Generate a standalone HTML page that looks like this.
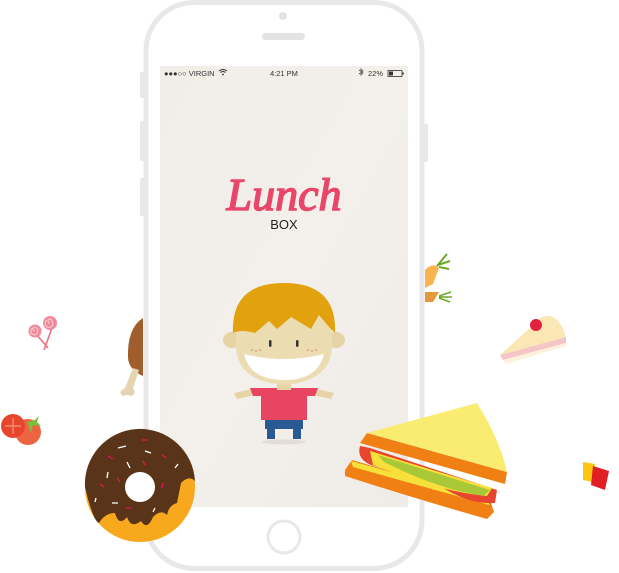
<!DOCTYPE html>
<html><head><style>html,body{margin:0;padding:0;background:#fff;overflow:hidden}</style></head>
<body>
<svg width="619" height="573" viewBox="0 0 619 573" xmlns="http://www.w3.org/2000/svg" style="display:block">
<rect x="140" y="72" width="5" height="26" rx="2" fill="#e8e8e8"/>
<rect x="140" y="121" width="5" height="40" rx="2" fill="#e8e8e8"/>
<rect x="140" y="178" width="5" height="38" rx="2" fill="#e8e8e8"/>
<rect x="423" y="124" width="5" height="38" rx="2" fill="#e8e8e8"/>
<rect x="146" y="2.5" width="276" height="566" rx="48" fill="#fff" stroke="#e8e8e8" stroke-width="5"/>
<circle cx="283" cy="16" r="4" fill="#e3e3e3"/>
<rect x="262" y="33" width="43" height="7" rx="3.5" fill="#e3e3e3"/>
<circle cx="284" cy="537" r="16" fill="#fff" stroke="#e8e8e8" stroke-width="3"/>
<defs><linearGradient id="sg" x1="0" y1="0" x2="1" y2="1"><stop offset="0" stop-color="#f1ede8"/><stop offset="0.5" stop-color="#f3f0eb"/><stop offset="1" stop-color="#efebe6"/></linearGradient></defs>
<rect x="160" y="66" width="248" height="441" fill="url(#sg)"/>
<g font-family="Liberation Sans, sans-serif" font-size="7.5" fill="#333">
<text x="164" y="76">●●●○○ VIRGIN</text>
<text x="270" y="76">4:21 PM</text>
<text x="368" y="76">22%</text>
</g>
<path d="M219 71 q4 -3 8 0 M220.5 72.5 q2.5 -2 5 0" stroke="#333" fill="none" stroke-width="1"/>
<circle cx="223" cy="74.5" r="0.9" fill="#333"/>
<path d="M359 70 l4 3 l-2 2 v-6 l2 2 l-4 3" stroke="#555" fill="none" stroke-width="0.8"/>
<rect x="388" y="70.5" width="14" height="6" fill="none" stroke="#333" stroke-width="0.8"/>
<rect x="389" y="71.5" width="4" height="4" fill="#333"/>
<rect x="402.5" y="72.5" width="1.3" height="2" fill="#333"/>
<text x="284" y="210" text-anchor="middle" font-family="Liberation Serif, serif" font-style="italic" font-size="46" fill="#e8476a" stroke="#e8476a" stroke-width="1.5">Lunch</text>
<text x="284" y="229" text-anchor="middle" font-family="Liberation Sans, sans-serif" font-size="13" fill="#222">BOX</text>
<ellipse cx="284" cy="442" rx="22" ry="2.5" fill="#e2ddd6"/>
<rect x="265" y="415" width="38" height="14" fill="#2a5a94"/>
<rect x="267" y="425" width="8" height="14" fill="#2a5a94"/>
<rect x="293" y="425" width="8" height="14" fill="#2a5a94"/>
<path d="M234 393 l18 -4 l3 6 l-18 4z M334 393 l-18 -4 l-3 6 l18 4z" fill="#e6d3a6"/>
<path d="M250 388 h68 l-3 8 l-8 0 v24 h-46 v-24 l-8 0z" fill="#e84562"/>
<rect x="277" y="378" width="14" height="12" fill="#e6d3a6"/>
<ellipse cx="232" cy="340" rx="9" ry="8" fill="#e6d3a6"/>
<ellipse cx="336" cy="340" rx="9" ry="8" fill="#e6d3a6"/>
<path d="M236 325 q0 -12 10 -14 h76 q10 2 10 14 v20 q0 36 -48 40 q-48 -4 -48 -40z" fill="#ecdcb2"/>
<path d="M233 333 q-2 -50 51 -50 q53 0 51 50 l-6 -6 l-10 -12 l-8 14 l-20 -12 l-14 12 l-8 -8 l-14 12 q-14 -4 -22 0z" fill="#e2a20e"/>
<path d="M244 354 q40 10 80 0 q-6 26 -40 26 q-34 0 -40 -26z" fill="#fff"/>
<rect x="269" y="340" width="2.5" height="7" rx="1.2" fill="#333"/>
<rect x="296" y="340" width="2.5" height="7" rx="1.2" fill="#333"/>
<g fill="#e89a8e"><circle cx="252" cy="350" r="1"/><circle cx="256" cy="351" r="1"/><circle cx="260" cy="350" r="1"/><circle cx="308" cy="350" r="1"/><circle cx="312" cy="351" r="1"/><circle cx="316" cy="350" r="1"/></g>
<path d="M425 270 q8 -8 14 -2 l-6 16 l-8 4z" fill="#f7b44f"/>
<path d="M437 266 l10 -12 M438 265 l12 -4 M439 267 l10 2" stroke="#6aa825" stroke-width="2"/>
<path d="M425 292 h14 l-6 10 h-8z" fill="#e49a3c"/>
<path d="M439 296 l12 -4 M439 297 l13 0 M439 298 l11 4" stroke="#6aa825" stroke-width="1.5"/>
<path d="M500 355 l42 -38 q14 -5 22 14 l2 6z" fill="#fbe7b4"/>
<path d="M500 355 l66 -18 l0 6 l-63 17z" fill="#f6c6c7"/>
<path d="M503 360 l63 -17 l0 3 l-60 18z" fill="#fcf1dd"/>
<circle cx="536" cy="325" r="6" fill="#e3223f"/>
<path d="M583 462 l12 2 l-2 18 l-10 -2z" fill="#fcc70d"/>
<path d="M593 466 l16 5 l-4 19 l-14 -5z" fill="#e11f25"/>
<!-- sandwich -->
<path d="M345 470 L352 460 L490 500 L494 512 L487 519 Q420 500 345 476 Z" fill="#f08013"/>
<path d="M351 461 L490 499 L489 505 L353 467 Z" fill="#f8e03a"/>
<path d="M360 446 Q356 460 374 466 L440 486 Q470 505 495 503 L497 490 L370 448 Z" fill="#e84530"/>
<path d="M370 451 L492 488 L487 496 Q440 492 373 465 Z" fill="#f8e03a"/>
<path d="M378 455 L490 490 L484 496 Q440 490 384 462 Z" fill="#a8c838"/>
<path d="M360 443 L367 433 L507 472 L505 484 Z" fill="#f08013"/>
<path d="M367 433 L477 403 Q500 440 507 472 Z" fill="#f9ec70"/>
<path d="M36 334 l12 14 M52 328 l-8 22" stroke="#ef6f83" stroke-width="1.6"/>
<circle cx="35" cy="331" r="6.5" fill="#f28a9b"/>
<circle cx="50" cy="323" r="7" fill="#f28a9b"/>
<path d="M35 331 a2 2 0 1 1 2 -2 a3.5 3.5 0 1 1 -4 -1 M50 323 a2 2 0 1 1 2 -2 a4 4 0 1 1 -5 -1" stroke="#fbd0d7" fill="none" stroke-width="1"/>
<circle cx="28" cy="432" r="13" fill="#ec6540"/>
<circle cx="13" cy="426" r="12" fill="#e8452e"/>
<path d="M13 418 v16 M5 426 h16" stroke="#f28a68" stroke-width="1.5"/>
<path d="M27 422 l8 -2 l4 -4 l-2 6 l4 4 l-8 -1 l-2 8 l-2 -6z" fill="#7cbd3d"/>
<path d="M143 318 q-16 10 -15 40 q1 12 15 18z" fill="#a05e2c"/>
<path d="M133 368 l6 2 l-6 18 q4 6 -2 8 q-4 -2 -8 0 q-6 -4 2 -8z" fill="#e6d3b0"/>
<circle cx="140" cy="487" r="55" fill="#f7a81c"/>
<path d="M85 487 a55 55 0 0 1 110 -6 q-6 -6 -14 2 q-2 10 -4 20 q-8 2 -10 12 q-6 -6 -14 2 q-6 14 -12 4 q-10 8 -14 -4 q-8 10 -12 -4 q-10 0 -16 10 q-6 -2 -14 -36z" fill="#5a3418"/>
<circle cx="140" cy="487" r="15" fill="#fff"/>
<g stroke="#fff" stroke-width="1.3"><path d="M118 448 l8 -2 M145 451 l6 2 M127 462 l3 6 M108 472 l-1 6 M175 468 l3 -4 M96 498 l-1 4 M112 503 l6 0 M155 508 l-2 4"/></g>
<g stroke="#e0145a" stroke-width="1.3"><path d="M142 440 l6 0 M108 456 l5 3 M162 455 l4 3 M143 461 l2 4 M117 478 l3 4 M100 484 l4 3 M163 483 l-1 5 M126 508 l6 0"/></g>
</svg>
</body></html>
